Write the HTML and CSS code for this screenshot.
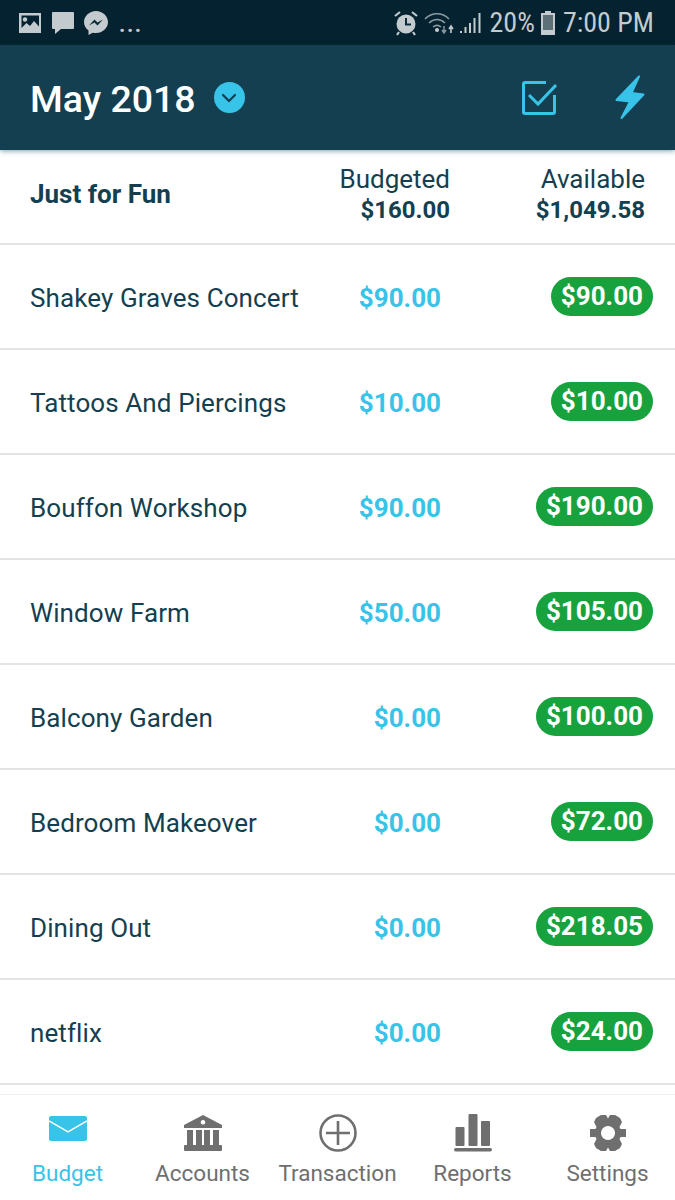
FILE: index.html
```html
<!DOCTYPE html>
<html lang="en">
<head>
    <meta charset="UTF-8">
    <title>Budget</title>
    <meta name="viewport" content="width=device-width, initial-scale=1.0">
    <link rel="stylesheet" href="styles.css">
</head>
<body>
    <!-- Phone status bar -->
    <div class="status-bar">
        <div class="status-left">
            <svg width="24" height="22" viewBox="0 0 24 22">
                <path fill="#c3cbce" fill-rule="evenodd" d="M1 1h22v20H1zM3.500 3.500v12.500l5-5 3.500 3 4-5 5 5.500V3.500z"/>
                <circle cx="7" cy="7.500" r="2.200" fill="#c3cbce"/>
            </svg>
            <svg width="24" height="24" viewBox="0 0 24 24">
                <path fill="#c3cbce" d="M2 1h20a1 1 0 0 1 1 1v15a1 1 0 0 1-1 1H10l-6 5v-5H2a1 1 0 0 1-1-1V2a1 1 0 0 1 1-1z"/>
            </svg>
            <svg width="24" height="24" viewBox="0 0 24 24">
                <path fill="#c3cbce" d="M12 0C5.400 0 0 5 0 11c0 3.500 1.700 6.500 4.500 8.500V24l4.200-2.300c1 .3 2.200.4 3.300.4 6.600 0 12-5 12-11S18.600 0 12 0z"/>
                <path fill="#0a2c39" d="M5 14.500l5.500-6 3 3 5.500-3-5.500 6-3-3z"/>
            </svg>
            <span class="status-dots">...</span>
        </div>
        <div class="status-right">
            <svg width="26" height="26" viewBox="0 0 26 26">
                <circle cx="13" cy="14" r="9.500" fill="#c3cbce"/>
                <path d="M13 8v6.500h5" fill="none" stroke="#0a2c39" stroke-width="2"/>
                <path d="M2 6l5-4M24 6l-5-4M6 22l-2 3M20 22l2 3" stroke="#c3cbce" stroke-width="2.200" fill="none"/>
            </svg>
            <svg class="wifi" width="32" height="24" viewBox="0 0 32 24">
                <path d="M1 8c7-7 17-7 24 0M5 12c5-4.500 11-4.500 16 0M9 16c2.500-2 5.500-2 8 0" fill="none" stroke="#8b9ba1" stroke-width="1.600"/>
                <circle cx="13" cy="19" r="2" fill="#c3cbce"/>
                <path d="M20 15v6M18 19l2 3 2-3" fill="none" stroke="#8b9ba1" stroke-width="1.400"/>
                <path d="M27 22v-6M25 18l2-3 2 3" fill="none" stroke="#c3cbce" stroke-width="1.600"/>
            </svg>
            <svg class="signal" width="24" height="24" viewBox="0 0 24 24">
                <path d="M2 22v-2M6.500 22v-6M11 22v-10M15.500 22V7M20.500 22V2" fill="none" stroke="#c3cbce" stroke-width="2"/>
            </svg>
            <span class="status-text">20%</span>
            <svg width="16" height="26" viewBox="0 0 16 26">
                <path fill="#c3cbce" d="M5 1h6v2h4v22H1V3h4z"/>
                <path fill="#5d7078" d="M3 5h10v15H3z"/>
            </svg>
            <span class="status-text clock">7:00 PM</span>
        </div>
    </div>

    <!-- App header -->
    <header class="app-header">
        <div class="month-picker">
            <h1>May 2018</h1>
            <span class="month-toggle">
                <svg width="16" height="10" viewBox="0 0 16 10">
                    <path d="M2 2l6 6 6-6" fill="none" stroke="#143f50" stroke-width="2.200" stroke-linecap="round"/>
                </svg>
            </span>
        </div>
        <div class="header-actions">
            <svg width="36" height="36" viewBox="0 0 36 36">
                <path d="M25 2.500H4a1.500 1.500 0 0 0-1.500 1.500v28A1.500 1.500 0 0 0 4 33.500h28a1.500 1.500 0 0 0 1.500-1.500V15" fill="none" stroke="#38c3e8" stroke-width="3"/>
                <path d="M8 15l9 9L35 5" fill="none" stroke="#38c3e8" stroke-width="3"/>
            </svg>
            <svg width="30" height="45" viewBox="0 0 30 45">
                <path fill="#38c3e8" stroke="#38c3e8" stroke-width="2" stroke-linejoin="round" d="M24 1.500L1.500 25 15 26.500 6.500 43 28.500 19.500 16.500 18z"/>
            </svg>
        </div>
    </header>

    <!-- Budget rows -->
    <main class="budget-list">
        <div class="group-row">
            <div class="group-name">Just for Fun</div>
            <div class="group-col budgeted-col">
                <span>Budgeted</span>
                <strong>$160.00</strong>
            </div>
            <div class="group-col available-col">
                <span>Available</span>
                <strong>$1,049.58</strong>
            </div>
        </div>
        <div class="row">
            <div class="row-name">Shakey Graves Concert</div>
            <div class="row-budgeted">$90.00</div>
            <div class="row-available"><span class="pill">$90.00</span></div>
        </div>
        <div class="row">
            <div class="row-name">Tattoos And Piercings</div>
            <div class="row-budgeted">$10.00</div>
            <div class="row-available"><span class="pill">$10.00</span></div>
        </div>
        <div class="row">
            <div class="row-name">Bouffon Workshop</div>
            <div class="row-budgeted">$90.00</div>
            <div class="row-available"><span class="pill">$190.00</span></div>
        </div>
        <div class="row">
            <div class="row-name">Window Farm</div>
            <div class="row-budgeted">$50.00</div>
            <div class="row-available"><span class="pill">$105.00</span></div>
        </div>
        <div class="row">
            <div class="row-name">Balcony Garden</div>
            <div class="row-budgeted">$0.00</div>
            <div class="row-available"><span class="pill">$100.00</span></div>
        </div>
        <div class="row">
            <div class="row-name">Bedroom Makeover</div>
            <div class="row-budgeted">$0.00</div>
            <div class="row-available"><span class="pill">$72.00</span></div>
        </div>
        <div class="row">
            <div class="row-name">Dining Out</div>
            <div class="row-budgeted">$0.00</div>
            <div class="row-available"><span class="pill">$218.05</span></div>
        </div>
        <div class="row">
            <div class="row-name">netflix</div>
            <div class="row-budgeted">$0.00</div>
            <div class="row-available"><span class="pill">$24.00</span></div>
        </div>
    </main>

    <!-- Bottom tabs -->
    <nav class="tabs">
        <div class="tab tab-active">
            <svg width="38" height="38" viewBox="0 0 38 38">
                <rect y="2" width="38" height="25" rx="2" fill="#38c3e8"/>
                <path d="M0 7l19 11L38 7" fill="none" stroke="#fff" stroke-width="1.500"/>
            </svg>
            <span>Budget</span>
        </div>
        <div class="tab">
            <svg width="38" height="38" viewBox="0 0 38 38">
                <path fill="#6f6f6f" fill-rule="evenodd" d="M19 1l19 10v3H0v-3zM19 6a2.300 2.300 0 1 0 .01 0z"/>
                <path fill="#6f6f6f" d="M3 16h6v15H3zM12 16h6v15h-6zM20 16h6v15h-6zM29 16h6v15h-6z"/>
                <rect y="31" width="38" height="6" rx="1" fill="#6f6f6f"/>
            </svg>
            <span>Accounts</span>
        </div>
        <div class="tab">
            <svg width="38" height="38" viewBox="0 0 38 38">
                <circle cx="19" cy="19" r="17.500" fill="none" stroke="#6f6f6f" stroke-width="2.600"/>
                <path d="M19 7v24M7 19h24" fill="none" stroke="#6f6f6f" stroke-width="2.600"/>
            </svg>
            <span>Transaction</span>
        </div>
        <div class="tab">
            <svg width="38" height="38" viewBox="0 0 38 38">
                <rect x="1.500" y="13" width="9" height="19" rx="1" fill="#6f6f6f"/>
                <rect x="14.500" y="0" width="9" height="32" rx="1" fill="#6f6f6f"/>
                <rect x="27" y="7" width="9" height="25" rx="1" fill="#6f6f6f"/>
                <rect y="34" width="38" height="3.500" rx="1.700" fill="#6f6f6f"/>
            </svg>
            <span>Reports</span>
        </div>
        <div class="tab">
            <svg width="38" height="38" viewBox="0 0 38 38">
                <path fill="#6f6f6f" fill-rule="evenodd" d="M12 1h5l2 3.500L21 1h5l5 3 2 4-2.500 5 1 2h5.500v8h-5.500l-1 2 2.500 5-2 4-5 3h-5l-2-3.500L17 37h-5l-5-3-2-4 2.500-5-1-2H1v-8h5.500l1-2L5 8l2-4zM19 12a7 7 0 1 0 .01 0z"/>
            </svg>
            <span>Settings</span>
        </div>
    </nav>
</body>
</html>
```

FILE: styles.css
```css
/* === Base === */
* {
    box-sizing: border-box;
}

body {
    margin: 0;
    width: 675px;
    height: 1200px;
    overflow: hidden;
    display: flex;
    flex-direction: column;
    background: #fff;
    color: #143f50;
    font-family: Roboto, "Liberation Sans", sans-serif;
}

/* === Status bar === */
.status-bar {
    height: 45px;
    flex: none;
    display: flex;
    justify-content: space-between;
    align-items: center;
    padding: 0 21px 0 18px;
    background: #04222f;
    color: #c3cbce;
}

.status-left,
.status-right {
    display: flex;
    align-items: center;
}

.status-left {
    gap: 9px;
}

.status-dots {
    font-size: 22px;
    font-weight: 700;
    letter-spacing: 1.500px;
    line-height: 22px;
    margin: 4px 0 0 2px;
}

.status-right {
    gap: 5px;
}

.status-right .wifi {
    margin-right: -2px;
}

.status-right .signal {
    margin-right: 2px;
}

.status-text {
    font-size: 28px;
    font-stretch: condensed;
    line-height: 32px;
}

.status-text.clock {
    margin-left: 2px;
}

/* === Header === */
.app-header {
    height: 105px;
    flex: none;
    display: flex;
    justify-content: space-between;
    align-items: center;
    padding: 0 30px;
    background: #143f50;
    box-shadow: 0 1px 5px rgba(20, 63, 80, 0.5);
    position: relative;
}

.month-picker {
    display: flex;
    align-items: center;
    gap: 18px;
}

h1 {
    margin: 0;
    padding-top: 2px;
    color: #fff;
    font-size: 37.500px;
    font-weight: 500;
}

.month-toggle {
    width: 31px;
    height: 31px;
    border-radius: 50%;
    background: #38c3e8;
    display: flex;
    justify-content: center;
    align-items: center;
}

.header-actions {
    display: flex;
    align-items: center;
    gap: 58px;
}

/* === Budget list === */
.budget-list {
    flex: 1;
    overflow: hidden;
}

.group-row,
.row {
    display: grid;
    grid-template-columns: 1fr 150px 195px;
    align-items: center;
    padding: 0 30px;
    border-bottom: 2px solid #e2e3e4;
}

.group-row {
    height: 95px;
}

.row {
    height: 105px;
    padding: 3px 22px 0 30px;
}

.group-name {
    margin-bottom: 6px;
    font-size: 26px;
    font-weight: 700;
}

.group-col {
    display: flex;
    flex-direction: column;
    align-items: flex-end;
    margin-bottom: 4px;
    font-size: 26px;
    line-height: 31px;
}

.group-col strong {
    font-size: 24px;
}

.row-name {
    font-size: 26px;
    letter-spacing: 0.100px;
}

.row-budgeted {
    text-align: right;
    padding-right: 17px;
    color: #38c3e8;
    font-size: 26px;
    font-weight: 700;
}

.row-available {
    margin-bottom: 4px;
    text-align: right;
}

.pill {
    display: inline-block;
    height: 39px;
    padding: 0 10px;
    border-radius: 20px;
    background: #17a23d;
    color: #fff;
    font-size: 26px;
    font-weight: 700;
    line-height: 39px;
    vertical-align: top;
}

/* === Bottom tabs === */
.tabs {
    height: 106px;
    flex: none;
    display: grid;
    grid-template-columns: repeat(5, 135px);
    border-top: 1px solid #f2f2f2;
    background: #fff;
}

.tab {
    display: flex;
    flex-direction: column;
    align-items: center;
    justify-content: flex-end;
    gap: 8px;
    padding-bottom: 14px;
    color: #6f6f6f;
    font-size: 22.500px;
}

.tab-active {
    color: #38c3e8;
}
```
